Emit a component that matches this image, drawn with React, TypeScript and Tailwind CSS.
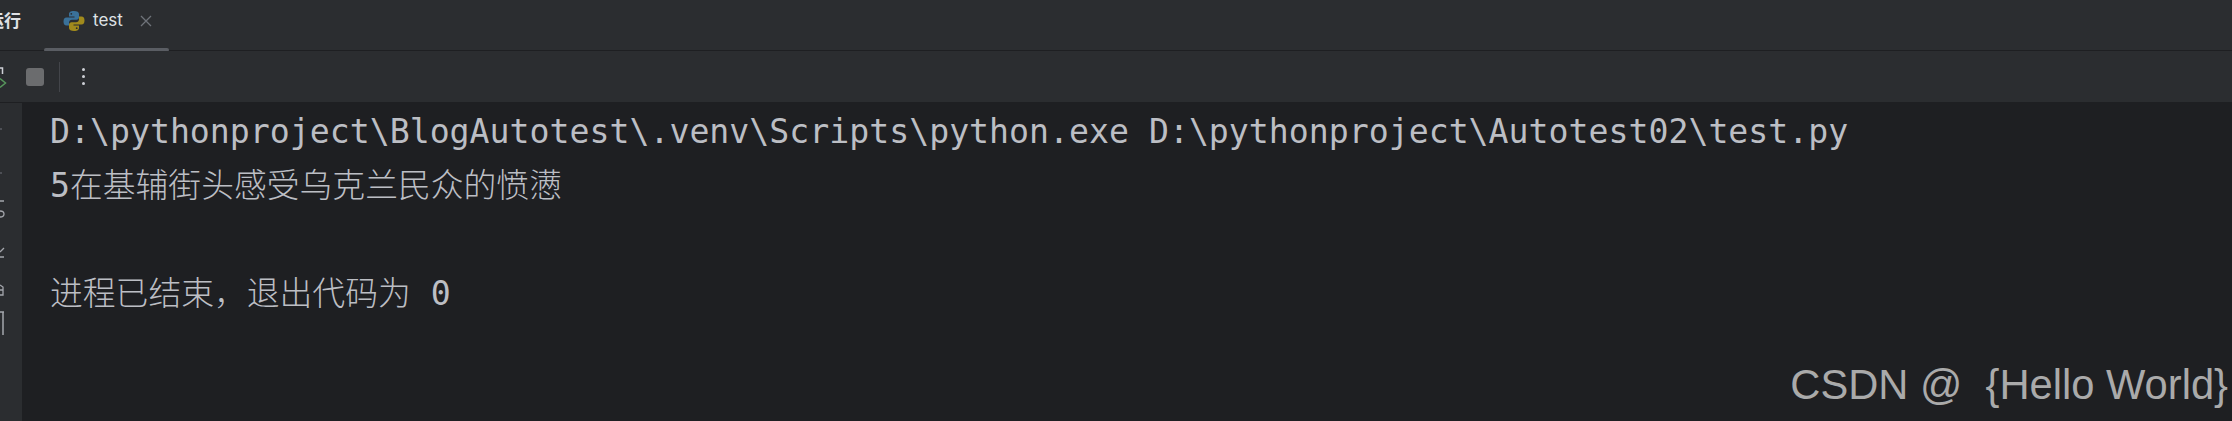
const MONO = "font-['DejaVu_Sans_Mono','Noto_Sans_CJK_SC',monospace]";
const CJK = "text-[32.8px] leading-[0] font-light font-['Noto_Sans_CJK_SC',sans-serif]";

function PythonIcon() {
  return (
    <svg width="22" height="22" viewBox="0 0 22 22" className="shrink-0">
      <path d="M11 1c-4 0-5 1.500-5 3v2.500h5.500V7.500H3.500C1.500 7.500 0.500 9 0.500 11.500s1 4 3 4H6v-2.800c0-1.700 1.300-3 3-3h4.500c1.400 0 2.500-1.100 2.500-2.500V4c0-2-2-3-5-3z" fill="#3a7199" />
      <circle cx="8.300" cy="3.800" r="0.900" fill="#2b2d30" />
      <path d="M11 21c4 0 5-1.500 5-3v-2.500h-5.500v-1H18.500c2 0 3-1.500 3-4s-1-4-3-4H16v2.800c0 1.700-1.300 3-3 3H8.500C7.100 12.300 6 13.400 6 14.800V18c0 2 2 3 5 3z" fill="#a18a1c" />
      <circle cx="13.700" cy="18.200" r="0.900" fill="#2b2d30" />
    </svg>
  );
}

function GutterMarks() {
  return (
    <svg width="8" height="320" viewBox="0 0 8 320" className="absolute left-0 top-0" fill="none" stroke="#a4a6ac" strokeWidth="1.300">
      <path d="M0 26h2M0 70h2" strokeWidth="1" stroke="#70737a" />
      <path d="M0 98h4M0 108c3 0 4 1 4 3s-1 3-4 3" />
      <path d="M0 149l4-4M0 154h4" />
      <path d="M0 182l3 2v8H0M0 187h3" />
      <path d="M0 209h3v23M3 209h1" strokeWidth="1.500" />
    </svg>
  );
}

export default function App() {
  return (
    <div className="h-[421px] w-[2232px] overflow-hidden bg-[#1e1f22] flex flex-col">
      <div className="h-[51px] shrink-0 bg-[#2b2d30] border-b border-[#1e1f22] flex items-start relative">
        <span className="absolute left-[-13px] top-[8px] text-[17px] leading-[24px] font-bold text-[#dfe1e5] font-['Noto_Sans_CJK_SC',sans-serif]">运行</span>
        <div className="ml-[44px] w-[125px] h-[51px] relative flex items-center pl-[19px] pb-[10px]">
          <PythonIcon />
          <span className="ml-[8px] text-[17px] text-[#dfe1e5] font-['Inter',sans-serif]">test</span>
          <svg width="12" height="12" viewBox="0 0 12 12" className="ml-[17px]"><path d="M1 1l10 10M11 1L1 11" stroke="#6f737a" strokeWidth="1.300" /></svg>
          <div className="absolute left-0 right-0 bottom-[-1px] h-[4px] rounded-[2px] bg-[#5a5d63]" />
        </div>
      </div>
      <div className="h-[51px] shrink-0 bg-[#2b2d30] flex items-center relative">
        <svg width="8" height="24" viewBox="0 0 8 24" className="shrink-0" fill="none">
          <path d="M0 3h2.500v6" stroke="#ced0d6" strokeWidth="1.500" />
          <path d="M0 13.500l5.500 4.500-5.500 4.500" stroke="#57965c" strokeWidth="1.500" />
        </svg>
        <div className="ml-[18px] w-[18px] h-[18px] rounded-[3px] bg-[#6b6c6e]" />
        <div className="ml-[15px] w-[1px] h-[30px] bg-[#43454a]" />
        <div className="ml-[22px] flex flex-col gap-[4px]">
          <div className="w-[3px] h-[3px] rounded-full bg-[#ced0d6]" />
          <div className="w-[3px] h-[3px] rounded-full bg-[#ced0d6]" />
          <div className="w-[3px] h-[3px] rounded-full bg-[#ced0d6]" />
        </div>
      </div>
      <div className="flex-1 flex min-h-0 relative">
        <div className="w-[22px] shrink-0 bg-[#2b2d30] relative overflow-hidden border-t border-[#1e1f22]">
          <GutterMarks />
        </div>
        <div className={`flex-1 pl-[28px] pt-[3px] text-[33.2px] leading-[54px] text-[#bcbec4] whitespace-pre ${MONO}`}>
          <div>{"D:\\pythonproject\\BlogAutotest\\.venv\\Scripts\\python.exe D:\\pythonproject\\Autotest02\\test.py"}</div>
          <div>5<span className={CJK}>在基辅街头感受乌克兰民众的愤懑</span></div>
          <div>{" "}</div>
          <div><span className={CJK}>进程已结束，退出代码为</span> 0</div>
        </div>
        <div className="absolute right-[4px] bottom-[13px] text-[41.7px] leading-[46px] text-[#aaaaaa] font-['Liberation_Sans',sans-serif] whitespace-pre">{"CSDN @  {Hello World}"}</div>
      </div>
    </div>
  );
}
